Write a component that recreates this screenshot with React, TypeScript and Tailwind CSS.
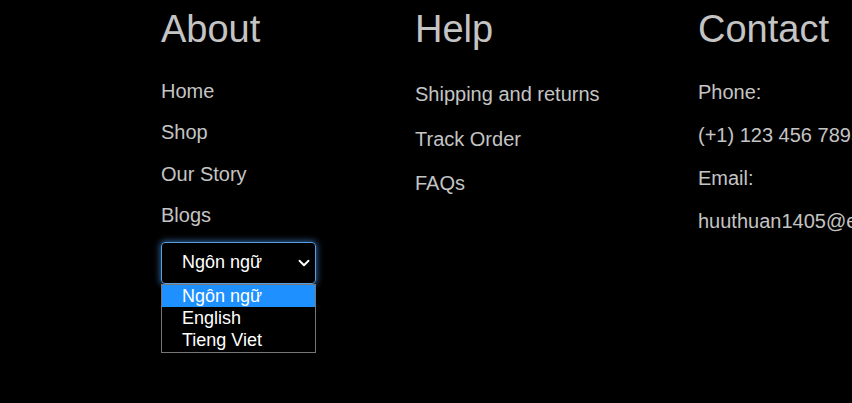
import { ChevronDown } from 'lucide-react'

const about = ['Home', 'Shop', 'Our Story', 'Blogs']
const help = ['Shipping and returns', 'Track Order', 'FAQs']
const contact = ['Phone:', '(+1) 123 456 7893', 'Email:', 'huuthuan1405@example.com']
const langs = ['Ngôn ngữ', 'English', 'Tieng Viet']

export default function App() {
  return (
    <div className="w-[852px] h-[403px] overflow-hidden bg-black font-['Liberation_Sans',Arial,sans-serif] text-[#c4c4c4]">
      <div className="flex pl-[161px] pt-[7px]">
        {/* About */}
        <div className="w-[254px] shrink-0">
          <h2 className="text-[38px] leading-[44px]">About</h2>
          <ul className="mt-[29px] flex flex-col gap-[18.3px] text-[20px] leading-[23px]">
            {about.map(item => (
              <li key={item}>{item}</li>
            ))}
          </ul>
          <div className="mt-[15px] w-[155px] relative">
            <div className="h-[42px] rounded-[4px] border border-[#5a9de0] shadow-[0_0_6px_1px_rgba(70,140,220,0.7)] flex items-center pl-[20px] pr-[2px] text-[18px] text-white">
              <span className="flex-1">Ngôn ngữ</span>
              <ChevronDown size={18} strokeWidth={2.5} className="text-white" />
            </div>
            <ul className="border border-[#767676] text-[18px] leading-[22.3px] text-white">
              {langs.map((l, i) => (
                <li key={l} className={i === 0 ? 'bg-[#1e90ff] pl-[20px]' : 'pl-[20px]'}>{l}</li>
              ))}
            </ul>
          </div>
        </div>

        {/* Help */}
        <div className="w-[283px] shrink-0">
          <h2 className="text-[38px] leading-[44px]">Help</h2>
          <ul className="mt-[32px] flex flex-col gap-[21.5px] text-[20px] leading-[23px]">
            {help.map(item => (
              <li key={item}>{item}</li>
            ))}
          </ul>
        </div>

        {/* Contact */}
        <div className="shrink-0 whitespace-nowrap">
          <h2 className="text-[38px] leading-[44px]">Contact</h2>
          <ul className="mt-[30px] flex flex-col gap-[20px] text-[20px] leading-[23px]">
            {contact.map(item => (
              <li key={item}>{item}</li>
            ))}
          </ul>
        </div>
      </div>
    </div>
  )
}
